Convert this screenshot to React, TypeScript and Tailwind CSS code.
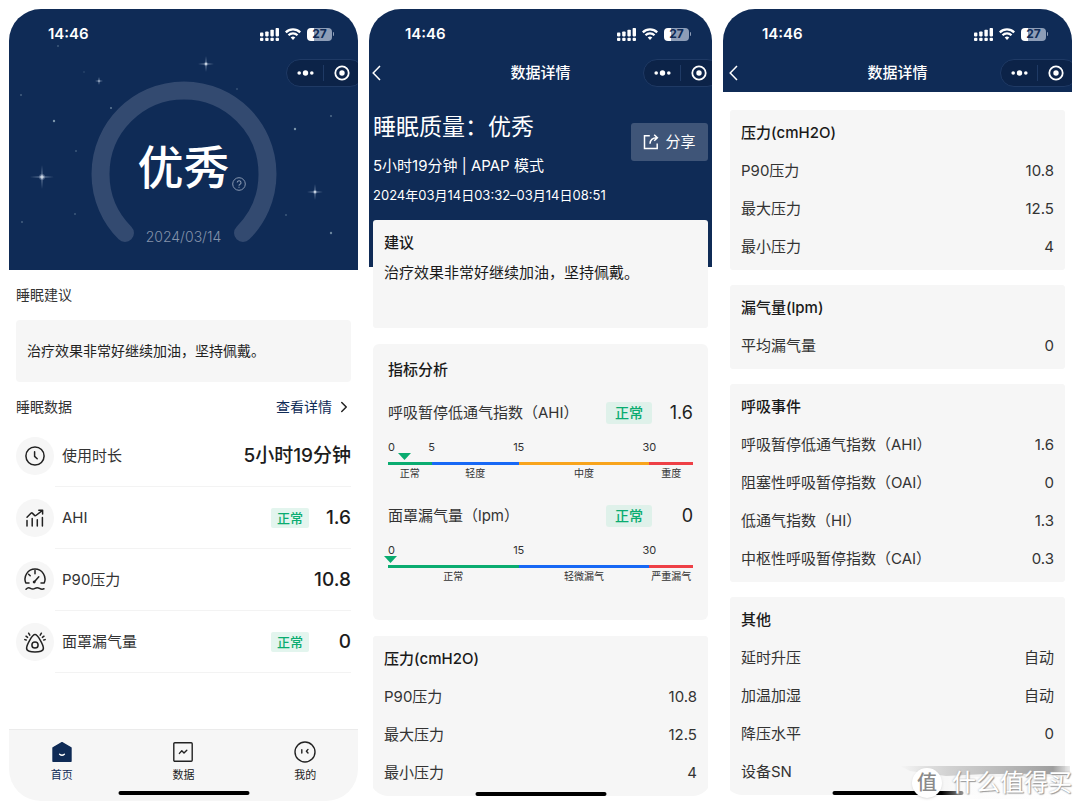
import type { ReactNode } from "react";
import { ChevronRight } from "lucide-react";

const FONT = "font-[Inter,'Noto_Sans_CJK_SC',sans-serif]";

type Row = { label: string; value: string };
type Segment = { from: number; label: string; grow: string; color: string };

const pressure: Row[] = [
  { label: "P90压力", value: "10.8" },
  { label: "最大压力", value: "12.5" },
  { label: "最小压力", value: "4" },
];

const leak: Row[] = [{ label: "平均漏气量", value: "0" }];

const events: Row[] = [
  { label: "呼吸暂停低通气指数（AHI）", value: "1.6" },
  { label: "阻塞性呼吸暂停指数（OAI）", value: "0" },
  { label: "低通气指数（HI）", value: "1.3" },
  { label: "中枢性呼吸暂停指数（CAI）", value: "0.3" },
];

const others: Row[] = [
  { label: "延时升压", value: "自动" },
  { label: "加温加湿", value: "自动" },
  { label: "降压水平", value: "0" },
  { label: "设备SN", value: "" },
];

const ahiScale: Segment[] = [
  { from: 0, label: "正常", grow: "grow", color: "bg-[#0aac70]" },
  { from: 5, label: "轻度", grow: "grow-2", color: "bg-[#1768f5]" },
  { from: 15, label: "中度", grow: "grow-3", color: "bg-[#f8a41c]" },
  { from: 30, label: "重度", grow: "grow", color: "bg-[#ee4046]" },
];

const leakScale: Segment[] = [
  { from: 0, label: "正常", grow: "grow-3", color: "bg-[#0aac70]" },
  { from: 15, label: "轻微漏气", grow: "grow-3", color: "bg-[#1768f5]" },
  { from: 30, label: "严重漏气", grow: "grow", color: "bg-[#ee4046]" },
];

const SCALE_MAX = 35;

// x, y, half length
const stars = [
  [33, 168, 12],
  [197, 55, 8],
  [306, 183, 8],
  [90, 72, 4],
];

// x, y, radius, opacity
const dots = [
  [45, 112, 1.2, 0.7],
  [102, 99, 1.1, 0.5],
  [12, 86, 1, 0.35],
  [49, 37, 1, 0.3],
  [67, 142, 1, 0.3],
  [66, 205, 1, 0.3],
  [13, 213, 1, 0.35],
  [286, 120, 1.2, 0.7],
  [322, 107, 1.1, 0.4],
  [322, 224, 1.2, 0.6],
  [277, 206, 1, 0.3],
  [228, 80, 1, 0.25],
  [308, 73, 1, 0.4],
  [75, 63, 1, 0.15],
];

function StatusBar() {
  return (
    <div className="flex h-[50px] items-center justify-between pr-6 pl-[39px] text-white">
      <span className="text-[15px] leading-5 font-semibold">14:46</span>
      <div className="flex items-center gap-[6px]">
        <svg className="h-[13px] w-[19px]" viewBox="0 0 19 13" fill="currentColor">
          <rect x="0" y="4.6" width="3.4" height="3.8" rx="0.8" />
          <rect x="5.2" y="3.4" width="3.4" height="5" rx="0.8" />
          <rect x="10.4" y="1.8" width="3.4" height="6.6" rx="0.8" />
          <rect x="15.6" y="0" width="3.4" height="8.4" rx="0.8" />
          <rect x="0" y="9.8" width="3.4" height="3.2" rx="1" />
          <rect x="5.2" y="9.8" width="3.4" height="3.2" rx="1" />
          <rect x="10.4" y="9.8" width="3.4" height="3.2" rx="1" />
          <rect x="15.6" y="9.8" width="3.4" height="3.2" rx="1" />
        </svg>
        <svg className="h-3 w-4" viewBox="0 0 16 12" fill="none" stroke="currentColor" strokeWidth="2.3">
          <path d="M0.8 4.4a10.2 10.2 0 0 1 14.4 0" />
          <path d="M3.5 7.2a6.4 6.4 0 0 1 9 0" />
          <path d="M8 12 5.7 9.6a3.3 3.3 0 0 1 4.6 0z" fill="currentColor" stroke="none" />
        </svg>
        <div className="flex items-center gap-px">
          <div className="flex h-[13px] w-[25px] items-center justify-center rounded-[4px] bg-linear-to-r from-white from-27% to-[#8d9db7] to-27% text-xs leading-3 font-bold text-[#0f2b56]">
            27
          </div>
          <div className="h-1 w-px rounded-r bg-[#8d9db7]" />
        </div>
      </div>
    </div>
  );
}

function NavBar({ title }: { title?: string }) {
  return (
    <div className="grid h-7 grid-cols-[1fr_auto_1fr] items-center text-white">
      {title ? (
        <button type="button" aria-label="返回" className="ml-[6px] justify-self-start">
          <svg className="h-4 w-[9px]" viewBox="0 0 9 16" fill="none" stroke="currentColor" strokeWidth="1.5">
            <path d="M8 1 1.2 8 8 15" />
          </svg>
        </button>
      ) : (
        <span />
      )}
      <h2 className="text-[15px] leading-5 font-medium">{title}</h2>
      <div className="-mr-[6px] flex h-7 w-[78px] items-center justify-self-end rounded-full border border-[#1f3a65] bg-[#0c2348]">
        <button type="button" aria-label="更多" className="flex h-4 w-[37px] items-center justify-center border-r border-[#1f3a65]">
          <svg className="h-2 w-[17px]" viewBox="0 0 17 8" fill="currentColor">
            <circle cx="2.2" cy="4" r="1.8" />
            <circle cx="8.5" cy="4" r="2.7" />
            <circle cx="14.8" cy="4" r="1.8" />
          </svg>
        </button>
        <button type="button" aria-label="关闭" className="flex w-9 items-center justify-center">
          <svg className="h-4 w-4" viewBox="0 0 16 16" fill="none">
            <circle cx="8" cy="8" r="6.7" stroke="currentColor" strokeWidth="1.8" />
            <circle cx="8" cy="8" r="2.7" fill="currentColor" />
          </svg>
        </button>
      </div>
    </div>
  );
}

function HomeIndicator() {
  return (
    <div className="absolute bottom-0 left-1/2 h-1 w-[131px] -translate-x-1/2 rounded-full bg-black" />
  );
}

function NightSky() {
  return (
    <svg className="absolute inset-0 h-full w-full" viewBox="0 0 349 261" preserveAspectRatio="none">
      {stars.map(([x, y, s]) => (
        <g key={`${x}-${y}`} fill="#9fb0c8">
          <path
            opacity="0.55"
            d={`M${x} ${y - s}L${x + 0.8} ${y - 0.8}L${x + s} ${y}L${x + 0.8} ${y + 0.8}L${x} ${y + s}L${x - 0.8} ${y + 0.8}L${x - s} ${y}L${x - 0.8} ${y - 0.8}Z`}
          />
          <circle cx={x} cy={y} r={s / 4} opacity="0.4" />
          <circle cx={x} cy={y} r={s / 7} fill="#dfe8f2" opacity="0.8" />
        </g>
      ))}
      {dots.map(([x, y, r, o]) => (
        <circle key={`${x}-${y}`} cx={x} cy={y} r={r} fill="#a9c3cf" opacity={o} />
      ))}
    </svg>
  );
}

function RowIcon({ children }: { children: ReactNode }) {
  return (
    <div className="flex h-[38px] w-[38px] shrink-0 items-center justify-center rounded-full bg-[#f6f6f6] text-[#222]">
      <svg
        className="h-6 w-6"
        viewBox="-12 -12 24 24"
        fill="none"
        stroke="currentColor"
        strokeWidth="1.5"
        strokeLinecap="round"
        strokeLinejoin="round"
      >
        {children}
      </svg>
    </div>
  );
}

const summary = [
  {
    label: "使用时长",
    value: "5小时19分钟",
    icon: (
      <>
        <circle r="9.1" />
        <path d="M-.4-4.2V.4L2.2 2.8" />
      </>
    ),
  },
  {
    label: "AHI",
    value: "1.6",
    badge: "正常",
    icon: (
      <>
        <path d="M-8 2.6V8M-2.8 .4V8M2.3 1.8V8M7.4-.6V8" />
        <path d="M-8-.8-3.8-5Q-3.2-5.4-2.7-4.9L-.2-2.4Q.3-2 .9-2.5L7.2-7.4M3.8-7.8H7.6V-4" />
      </>
    ),
  },
  {
    label: "P90压力",
    value: "10.8",
    icon: (
      <>
        <path d="M-6 3H-9.2A10 10 0 1 1 9.2 3H6" />
        <path d="M0-9.6V-6.2M-6.4-5.8-4.8-4.2M-1 2.2 3.8-3.2" />
        <circle cx="-.8" cy="2" r=".7" />
        <path d="M-9 9.2Q-6.8 7-4.5 8.4T0 8.4 4.5 8.4 9 8.8" />
      </>
    ),
  },
  {
    label: "面罩漏气量",
    value: "0",
    badge: "正常",
    icon: (
      <>
        <path d="M0-7.4C2.8-7.4 8.2 2.6 8.4 6 8.6 9.4 4 10 0 10S-8.6 9.4-8.4 6C-8.2 2.6-2.8-7.4 0-7.4Z" />
        <circle cx="0" cy="3" r="3.1" />
        <path d="M-6.4-8.8-5.2-6.8M-9-5.8-7.4-4.6M-10.2-2.4-8.8-2M6.4-8.8 5.2-6.8M9-5.8 7.4-4.6M10.2-2.4 8.8-2" />
      </>
    ),
  },
];

const tabs = [
  {
    label: "首页",
    className: "text-[#0f2b56]",
    icon: (
      <>
        <path d="M11 1.6 20 6.8V20.2H2V6.8Z" fill="currentColor" stroke="currentColor" />
        <path d="M8.6 13.2q2.4 2 4.8 0" stroke="#fff" />
      </>
    ),
  },
  {
    label: "数据",
    className: "text-[#222]",
    icon: (
      <>
        <rect x="1.8" y="1.8" width="18.4" height="18.4" rx="1" stroke="currentColor" />
        <path d="M7.4 12.4 9.8 9.8 12 12 14.8 9.2" stroke="currentColor" />
      </>
    ),
  },
  {
    label: "我的",
    className: "text-[#222]",
    icon: (
      <>
        <circle cx="11" cy="11" r="10" stroke="currentColor" />
        <path d="M7.8 8.8V12M14 8.4 12.4 10.2 14 12" stroke="currentColor" />
      </>
    ),
  },
];

function HomeScreen() {
  return (
    <section className="relative">
      <div className="overflow-hidden rounded-[32px]">
        <header className="relative overflow-hidden bg-[#0f2b56]">
          <NightSky />
          <div className="relative">
            <StatusBar />
            <NavBar />
            <div className="relative mx-auto -mt-[6px] h-[189px] w-[186px] text-center">
              <svg className="absolute inset-0 h-[186px] w-[186px]" viewBox="0 0 186 186" fill="none">
                <path
                  d="M34 152A83.5 83.5 0 1 1 152 152"
                  stroke="#334a70"
                  strokeWidth="18"
                  strokeLinecap="round"
                />
                <g stroke="#8797b0">
                  <circle cx="148" cy="103" r="6.3" />
                  <path d="M146.2 101.6a1.9 1.9 0 1 1 2.6 1.8q-.8.4-.8 1.3M148 105.7v1" strokeWidth="1.1" />
                </g>
              </svg>
              <div className="relative">
                <h1 className="pt-[58px] text-[46px] leading-[56px] font-medium text-white">优秀</h1>
                <p className="mt-8 text-sm font-light text-[#8492aa]">2024/03/14</p>
              </div>
            </div>
          </div>
        </header>

        <main className="bg-white px-[7px] pt-[15px]">
          <h2 className="text-sm text-[#333]">睡眠建议</h2>
          <p className="mt-[15px] rounded-[4px] bg-[#f6f6f6] px-[11px] py-[21px] text-sm text-[#222]">
            治疗效果非常好继续加油，坚持佩戴。
          </p>
          <div className="mt-[15px] flex items-center justify-between">
            <h2 className="text-sm text-[#333]">睡眠数据</h2>
            <a href="#detail" className="flex items-center gap-[3px] text-sm text-[#0f2b56]">
              查看详情
              <ChevronRight className="-mr-[2px] h-[18px] w-[18px] text-[#222]" strokeWidth={2} />
            </a>
          </div>
          <ul className="mt-2">
            {summary.map((s) => (
              <li key={s.label} className="flex h-[62px] items-center">
                <RowIcon>{s.icon}</RowIcon>
                <div className="ml-px flex h-full grow items-center border-b border-[#f3f3f3] pl-[7px]">
                  <span className="grow text-[15px] leading-5 text-[#333]">{s.label}</span>
                  {s.badge && (
                    <span className="flex h-5 w-[38px] items-center justify-center rounded-[2px] bg-[#e3f5ee] text-[13px] leading-5 font-medium text-[#0aac70]">
                      {s.badge}
                    </span>
                  )}
                  <span className="min-w-[42px] text-right text-[19px] leading-6 font-medium text-[#1c1c1c]">
                    {s.value}
                  </span>
                </div>
              </li>
            ))}
          </ul>
        </main>

        <nav className="mt-14 border-t border-[#ebebeb] bg-[#f6f6f6]">
          <div className="-mx-2 grid h-[71px] grid-cols-3 pt-[11px]">
            {tabs.map((t) => (
              <a key={t.label} href={`#${t.label}`} className={`flex flex-col items-center gap-1 ${t.className}`}>
                <svg
                  className="h-[22px] w-[22px]"
                  viewBox="0 0 22 22"
                  fill="none"
                  strokeWidth="1.4"
                  strokeLinejoin="round"
                  strokeLinecap="round"
                >
                  {t.icon}
                </svg>
                <span className="text-[11px] leading-4">{t.label}</span>
              </a>
            ))}
          </div>
        </nav>
      </div>
      <div className="absolute bottom-[6px] left-1/2 h-1 w-[131px] -translate-x-1/2 rounded-full bg-black" />
    </section>
  );
}

function DataCard({ title, rows }: { title: string; rows: Row[] }) {
  return (
    <section className="rounded-[3px] bg-[#f6f6f6] px-[11px] py-1 text-[15px] text-[#333]">
      <h3 className="flex h-[38px] items-center font-medium text-[#1a1a1a]">{title}</h3>
      <dl>
        {rows.map((r) => (
          <div key={r.label} className="flex h-[38px] items-center justify-between">
            <dt>{r.label}</dt>
            <dd>{r.value}</dd>
          </div>
        ))}
      </dl>
    </section>
  );
}

function Metric({ name, value, scale }: { name: string; value: number; scale: Segment[] }) {
  return (
    <div className="text-[#333]">
      <div className="flex h-8 items-center">
        <span className="grow text-[15px] leading-5">{name}</span>
        <span className="flex h-[22px] w-[46px] items-center justify-center rounded-[3px] bg-[#dff1ea] text-sm font-medium text-[#0aac70]">
          正常
        </span>
        <span className="w-[41px] text-right text-lg leading-6 text-[#222]">{value}</span>
      </div>
      <div className="relative mt-[10px] text-[11px] leading-4">
        <div className="flex">
          {scale.map((s, i) => (
            <div key={s.label} className={`w-0 ${s.grow}`}>
              <span className={i ? "inline-block -translate-x-1/2" : "inline-block"}>{s.from}</span>
            </div>
          ))}
        </div>
        <div className="mt-[7px] flex h-[3px]">
          {scale.map((s) => (
            <div key={s.label} className={`w-0 ${s.grow} ${s.color}`} />
          ))}
        </div>
        <div className="flex text-[10px]">
          {scale.map((s) => (
            <span key={s.label} className={`w-0 text-center whitespace-nowrap ${s.grow}`}>
              {s.label}
            </span>
          ))}
        </div>
        <svg
          className="absolute top-[14px] -ml-1 h-[7px] w-[13px]"
          style={{ left: `${(value / SCALE_MAX) * 100}%` }}
          viewBox="0 0 13 7"
          fill="#0aac70"
        >
          <path d="M0 0H13L6.5 7Z" />
        </svg>
      </div>
    </div>
  );
}

function DetailScreen() {
  return (
    <section className="relative overflow-hidden rounded-t-[32px] rounded-b-[20px]">
      <header className="bg-[#0f2b56] pb-[62px] text-white">
        <div className="-mx-[3px]">
          <StatusBar />
          <NavBar title="数据详情" />
        </div>
        <div className="flex items-start justify-between px-1 pt-[26px]">
          <div>
            <h1 className="text-[23px] leading-7">睡眠质量：优秀</h1>
            <p className="mt-[13px] text-[15px] leading-6">5小时19分钟 | APAP 模式</p>
            <p className="mt-[7px] text-[13px] leading-5">2024年03月14日03:32–03月14日08:51</p>
          </div>
          <button
            type="button"
            className="mt-[10px] flex h-[38px] w-[77px] items-center justify-center gap-[6px] rounded-[3px] bg-[#3f5578] text-[15px]"
          >
            <svg className="h-4 w-4" viewBox="0 0 16 16" fill="none" stroke="currentColor" strokeWidth="1.5">
              <path d="M6.8 1.8H1.5V14.5H14.2V9.5" />
              <path d="M7 9.8C7 6 9.5 3.8 14 3.8M11.2 .8 14.4 3.8 11.2 6.8" />
            </svg>
            分享
          </button>
        </div>
      </header>
      <main className="relative -mt-[47px] flex flex-col px-1">
        <section className="min-h-[108px] rounded-[3px] bg-[#f6f6f6] px-[11px] pt-3 text-[15px] leading-[22px] text-[#1a1a1a]">
          <h3 className="font-medium">建议</h3>
          <p className="mt-2">治疗效果非常好继续加油，坚持佩戴。</p>
        </section>
        <section className="mt-4 rounded-[6px] bg-[#f6f6f6] px-[15px] pt-[15px] pb-9">
          <h3 className="mb-4 text-[15px] leading-[22px] font-medium text-[#1a1a1a]">指标分析</h3>
          <div className="flex flex-col gap-[19px]">
            <Metric name="呼吸暂停低通气指数（AHI）" value={1.6} scale={ahiScale} />
            <Metric name="面罩漏气量（lpm）" value={0} scale={leakScale} />
          </div>
        </section>
        <div className="mt-4">
          <DataCard title="压力(cmH2O)" rows={pressure} />
        </div>
      </main>
      <HomeIndicator />
    </section>
  );
}

function Watermark() {
  return (
    <div className="absolute right-0 -bottom-1 h-11 w-[186px]">
      <svg className="absolute inset-0 h-full w-full" viewBox="0 0 186 44" preserveAspectRatio="none">
        <defs>
          <linearGradient id="streak" x1="0" x2="1">
            <stop offset="0" stopColor="#999" stopOpacity="0" />
            <stop offset="0.3" stopColor="#aaa" stopOpacity="0.5" />
            <stop offset="0.9" stopColor="#888" stopOpacity="0.8" />
            <stop offset="1" stopColor="#999" stopOpacity="0.2" />
          </linearGradient>
          <linearGradient id="haze" x1="0" x2="1">
            <stop offset="0.3" stopColor="#fff" stopOpacity="0" />
            <stop offset="0.5" stopColor="#fcfcfc" />
            <stop offset="1" stopColor="#fff" />
          </linearGradient>
        </defs>
        <rect x="0" y="22" width="186" height="22" fill="url(#haze)" />
        <path d="M14 11H184V20Q120 17 60 21L24 16Z" fill="url(#streak)" />
      </svg>
      <div className="relative flex h-full items-center justify-end gap-[10px] pt-3 text-white">
        <span className="flex h-[30px] w-[30px] items-center justify-center rounded-full bg-white text-xl leading-7 font-medium text-[#8a8a8a] shadow">
          值
        </span>
        <span className="text-2xl [text-shadow:1px_1px_1px_#999,0_0_2px_#aaa]">什么值得买</span>
      </div>
    </div>
  );
}

function DetailMoreScreen() {
  return (
    <div className="relative">
      <section className="relative overflow-hidden rounded-t-[32px] rounded-b-[20px]">
        <header className="bg-[#0f2b56] pb-[5px]">
          <StatusBar />
          <NavBar title="数据详情" />
        </header>
        <main className="flex flex-col gap-[15px] px-[7px] pt-[18px]">
          <DataCard title="压力(cmH2O)" rows={pressure} />
          <DataCard title="漏气量(lpm)" rows={leak} />
          <DataCard title="呼吸事件" rows={events} />
          <DataCard title="其他" rows={others} />
        </main>
        <HomeIndicator />
      </section>
      <Watermark />
    </div>
  );
}

export default function App() {
  return (
    <div
      className={`grid min-h-screen grid-cols-[349fr_343fr_349fr] items-start gap-[11px] bg-white pt-[9px] pr-2 pl-[9px] ${FONT}`}
    >
      <HomeScreen />
      <DetailScreen />
      <DetailMoreScreen />
    </div>
  );
}
